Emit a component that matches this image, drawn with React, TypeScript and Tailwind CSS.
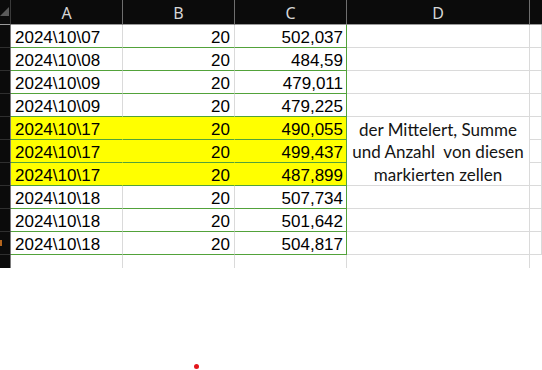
import React from 'react';

const rows = [
  { a: '2024\\10\\07', b: '20', c: '502,037', hi: false },
  { a: '2024\\10\\08', b: '20', c: '484,59', hi: false },
  { a: '2024\\10\\09', b: '20', c: '479,011', hi: false },
  { a: '2024\\10\\09', b: '20', c: '479,225', hi: false },
  { a: '2024\\10\\17', b: '20', c: '490,055', hi: true },
  { a: '2024\\10\\17', b: '20', c: '499,437', hi: true },
  { a: '2024\\10\\17', b: '20', c: '487,899', hi: true },
  { a: '2024\\10\\18', b: '20', c: '507,734', hi: false },
  { a: '2024\\10\\18', b: '20', c: '501,642', hi: false },
  { a: '2024\\10\\18', b: '20', c: '504,817', hi: false },
];

const rowHead = 'bg-[#0b0b0b] border-r border-r-[#7c7c7c] border-b border-b-[#2f2f2f]';
const headCell =
  'bg-[#0b0b0b] border-r border-r-[#6e6e6e] border-b border-b-[#9a9a9a] flex items-center justify-center pt-[1px] text-[16px] text-[#d6d6d6] font-["Noto_Sans",sans-serif]';
const grid = 'border-r border-b border-[#dadada]';

export default function App() {
  return (
    <div className="w-[542px] h-[370px] bg-white overflow-hidden">
      <div className="grid grid-cols-[11px_112px_112px_112px_183px_1fr] grid-rows-[25px_repeat(10,23px)_13px] font-['Liberation_Sans',Arial,sans-serif] text-[17px] leading-none text-black">
        {/* Header */}
        <div className="bg-[#0b0b0b] border-r border-r-[#3a3a3a] border-b border-b-[#9a9a9a] flex items-end">
          <svg width="10" height="24" viewBox="0 0 10 24">
            <polygon points="9,7 9,16 0,16" fill="#5a5a5a" />
          </svg>
        </div>
        <div className={headCell}>A</div>
        <div className={headCell}>B</div>
        <div className={headCell}>C</div>
        <div className={headCell}>D</div>
        <div className="bg-[#0b0b0b] border-b border-b-[#9a9a9a]" />

        {rows.map((r, i) => (
          <React.Fragment key={i}>
            <div className={`${rowHead} flex items-center`}>
              {i === 9 && <span className="w-[2px] h-[6px] bg-[#b5651d]" />}
            </div>
            <div
              className={`flex items-end pl-[4px] pb-[1px] border-b border-b-[#52a23a] border-r ${
                r.hi ? 'bg-[#ffff00] border-r-[#ffff00]' : 'border-r-[#dadada]'
              }`}
            >
              {r.a}
            </div>
            <div
              className={`flex items-end justify-end pr-[4px] pb-[1px] border-b border-b-[#52a23a] border-r ${
                r.hi ? 'bg-[#ffff00] border-r-[#ffff00]' : 'border-r-[#dadada]'
              }`}
            >
              {r.b}
            </div>
            <div
              className={`flex items-end justify-end pr-[3px] pb-[1px] border-b border-r border-[#52a23a] ${
                r.hi ? 'bg-[#ffff00]' : ''
              }`}
            >
              {r.c}
            </div>
            {i === 4 && (
              <div
                className={`${grid} row-span-3 flex flex-col items-center justify-center pt-[3px] text-[17px] leading-[22.5px] text-[#141414] font-['Lato',sans-serif] whitespace-pre`}
              >
                <span>der Mittelert, Summe</span>
                <span>und Anzahl  von diesen</span>
                <span>markierten zellen</span>
              </div>
            )}
            {(i < 4 || i > 6) && <div className={grid} />}
            <div className={grid} />
          </React.Fragment>
        ))}

        {/* partial row 11 */}
        <div className="bg-[#0b0b0b] border-r border-r-[#7c7c7c]" />
        <div className="border-r border-r-[#dadada]" />
        <div className="border-r border-r-[#dadada]" />
        <div className="border-r border-r-[#dadada]" />
        <div className="border-r border-r-[#dadada]" />
        <div />
      </div>

      <div className="pt-[96px] pl-[194px]">
        <div className="w-[5px] h-[5px] rounded-full bg-[#e3161b]" />
      </div>
    </div>
  );
}
